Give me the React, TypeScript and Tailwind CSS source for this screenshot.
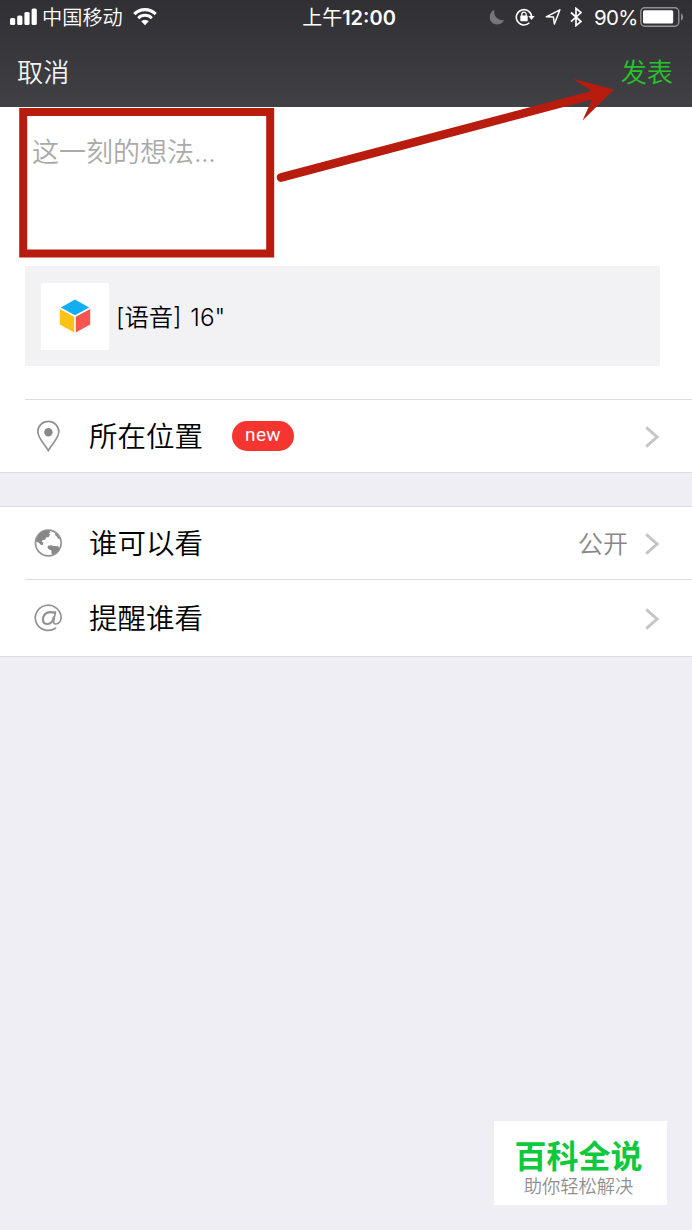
import type { ReactNode } from "react";

// Props for a single settings row
interface OptionRowProps {
  icon: ReactNode;
  label: string;
  value?: string;
  badge?: string;
  className: string;
}

// Icons of the status bar
function SignalIcon() {
  return (
    <svg className="w-[27px] h-[18px]" viewBox="0 0 27 18" fill="#fff">
      <rect x="0" y="10" width="5.2" height="7" rx="1.5" />
      <rect x="7.2" y="7.5" width="5.2" height="9.5" rx="1.5" />
      <rect x="14.4" y="4" width="5.2" height="13" rx="1.5" />
      <rect x="21.6" y="0.5" width="5.2" height="16.5" rx="1.5" />
    </svg>
  );
}

function WifiIcon() {
  return (
    <svg className="w-6 h-[18px]" viewBox="0 0 24 18" fill="none" stroke="#fff">
      <path d="M1.3 6.2C7.3.1 16.7.1 22.7 6.2" strokeWidth="3.1" />
      <path d="M5.2 10.2c3.9-3.8 9.7-3.8 13.6 0" strokeWidth="3" />
      <path d="M12 17.2l-3.8-3.9c2.2-1.9 5.4-1.9 7.6 0z" fill="#fff" stroke="none" />
    </svg>
  );
}

function MoonIcon() {
  return (
    <svg className="w-4 h-4" viewBox="0 0 16 16" fill="#77767b">
      <path d="M5.4.8C4.2 6.6 8.2 12 15.2 11.2 13.6 14 11 15.4 8 15.4 3.8 15.4.7 12.3.7 8.3.7 5 2.4 2.1 5.4.8z" />
    </svg>
  );
}

function RotationLockIcon() {
  return (
    <svg className="w-5 h-[18px]" viewBox="0 0 20 18" fill="none" stroke="#fff" strokeWidth="1.6">
      <path d="M14.4 14.8A7.7 7.7 0 1 1 16.7 9" />
      <path d="M13.4 8h6.2l-3.1 4z" fill="#fff" stroke="none" />
      <path d="M6.8 8V6.4a2.2 2.2 0 0 1 4.4 0V8" strokeWidth="1.3" />
      <rect x="5.3" y="7.6" width="7.4" height="5.6" rx=".8" fill="#fff" stroke="none" />
    </svg>
  );
}

function LocationIcon() {
  return (
    <svg className="w-4 h-[18px]" viewBox="0 0 16 18" fill="none" stroke="#fff" strokeWidth="1.5">
      <path d="M1.2 8.8L14.9 1.8 9.4 16 8.4 9z" strokeLinejoin="round" />
    </svg>
  );
}

function BluetoothIcon() {
  return (
    <svg className="w-3 h-5" viewBox="0 0 12 20" fill="none" stroke="#fff" strokeWidth="1.7">
      <path d="M1 5.5l10 9L6 18.6V1.4l5 4.2-10 9" />
    </svg>
  );
}

function BatteryIcon() {
  return (
    <svg className="w-11 h-5" viewBox="0 0 44 20" fill="none">
      <rect x=".8" y=".8" width="38" height="18.4" rx="4" stroke="#929196" strokeWidth="1.4" />
      <rect x="3" y="3.2" width="30.2" height="13.4" rx="1.6" fill="#fff" />
      <path d="M41 6.4c2.8 1.2 2.8 5.8 0 7z" fill="#8b8a8f" />
    </svg>
  );
}

// Icons of the post and its options
function CubeIcon() {
  return (
    <svg className="w-8 h-[34px]" viewBox="0 0 32 34">
      <path d="M16 .6L30.2 8.5 16 16.2 1.8 8.5z" fill="#13aef2" />
      <path d="M.8 10L15.2 17.7v15.8L.8 25.4z" fill="#f8c316" />
      <path d="M31.2 10L16.8 17.7v15.8l14.4-8.1z" fill="#f65353" />
    </svg>
  );
}

function PinIcon() {
  return (
    <svg className="w-6 h-8" viewBox="0 0 24 32">
      <path
        d="M12.3 30.5C8.8 24.4 1.8 18 1.8 11.8a10.5 10.5 0 0 1 21 0c0 6.2-7 12.6-10.5 18.7z"
        fill="none"
        stroke="#929292"
        strokeWidth="1.7"
      />
      <circle cx="12.4" cy="12.2" r="4.2" fill="#888" />
    </svg>
  );
}

function GlobeIcon() {
  return (
    <svg className="w-7 h-7" viewBox="0 0 28 28">
      <circle cx="14.3" cy="14" r="12.8" fill="none" stroke="#929292" strokeWidth="1.7" />
      <path
        d="M2.2 12.5C2.5 7 6.5 2 12.4 1.4l3.2.5 1 1.5-1.8.6 1.2 1.8-1.4 2.2-2.4.5-1.2 2.2-2.6.6-.6 1.4 1.6.8-.6 2.4-1.8.2-1.8-2.2z"
        fill="#888"
      />
      <path
        d="M13.8 16.8l3.4-.6 2.1.8 4.8.2 1.6 1.8c-1.7 3.7-4.4 5.8-7.7 6.6l-.8-2.6.5-1.5-2.2-.8-1.9-1.7z"
        fill="#888"
      />
      <path d="M21.5 3.9l3 3.3 1.3 3-1.6-.4-1.5-2.4-1.7-1.4z" fill="#888" />
    </svg>
  );
}

function MentionIcon() {
  return (
    <svg
      className="w-7 h-7"
      viewBox="0 0 28 28"
      fill="none"
      stroke="#929292"
      strokeWidth="1.7"
      strokeLinecap="round"
    >
      <path d="M21.5 24.2A12.9 12.6 0 1 1 27.1 13.4c0 4.1-2.5 6.6-5.2 6.6-2 0-2.6-1.2-2.2-3.3l1.7-8.6" />
      <path
        d="M19.7 13.4c-.9 4.4-3.3 6.6-6.1 6.6-2.9 0-4.7-1.7-4.7-4.6 0-4.2 3-7.3 7.2-7.3 1.8 0 3.4.1 4.9.5"
        strokeWidth="2.2"
      />
    </svg>
  );
}

function ChevronIcon() {
  return (
    <svg
      className="w-3.5 h-[22px]"
      viewBox="0 0 14 22"
      fill="none"
      stroke="#c5c5c9"
      strokeWidth="2.9"
    >
      <path d="M1.2 1.3L12 11 1.2 20.7" />
    </svg>
  );
}

// One tappable row of the options list
function OptionRow({ icon, label, value, badge, className }: OptionRowProps) {
  return (
    <div className={`flex items-center pl-[34px] pr-[33px] ${className}`}>
      <div className="w-7 flex justify-center">{icon}</div>
      <span className="ml-[27px] pt-0.5 text-[28.5px] leading-10 text-black">{label}</span>
      {badge && (
        <span className="ml-[29px] w-[62px] h-[30px] rounded-full bg-[#f43530] text-center text-[19px] leading-[27px] tracking-[0.4px] text-white font-normal font-[Roboto]">
          {badge}
        </span>
      )}
      <div className="ml-auto pt-0.5 flex items-center">
        {value && <span className="mr-[17px] text-[25px] leading-9 text-[#888]">{value}</span>}
        <ChevronIcon />
      </div>
    </div>
  );
}

function StatusBar() {
  return (
    <div className="grid grid-cols-[291px_116px_1fr] h-9 text-[20px] leading-9 text-white">
      <div className="flex items-center pl-[10px] h-[34px]">
        <SignalIcon />
        <span className="ml-[5px] mr-[10px] pt-px text-[20.2px]">中国移动</span>
        <WifiIcon />
      </div>
      <div className="text-center font-normal whitespace-nowrap">
        上午<span className="font-semibold">12:00</span>
      </div>
      <div className="flex items-center justify-end pr-2 h-[34px]">
        <MoonIcon />
        <div className="ml-2.5 mr-[10px]">
          <RotationLockIcon />
        </div>
        <LocationIcon />
        <div className="ml-[9px] mr-3">
          <BluetoothIcon />
        </div>
        <span className="w-[41px] mr-[5px] pt-px text-[20.5px] tracking-[-0.7px] font-normal">
          90%
        </span>
        <BatteryIcon />
      </div>
    </div>
  );
}

// Red frame and arrow that point out the text field and the send button
function Annotations() {
  return (
    <svg className="absolute left-0 top-0 w-[692px] h-[270px]" viewBox="0 0 692 270">
      <rect x="23.2" y="112" width="247" height="141.5" fill="none" stroke="#b71c0f" strokeWidth="8" />
      <path
        d="M280 173.2L591.5 91 573 78.8l41 10.8-31.5 31 9.5-21.2L282 181.8c-5.5 1-7.5-7.2-2-8.6z"
        fill="#b71c0f"
      />
    </svg>
  );
}

export default function App() {
  return (
    <main className="relative w-[692px] h-[1230px] flex flex-col bg-[#efeef5] overflow-hidden font-[350] font-['Inter','Noto_Sans_CJK_SC',sans-serif]">
      <header className="h-[107px] shrink-0 bg-linear-to-b from-[#302f34] to-[#414044]">
        <StatusBar />
        <div className="flex justify-between pl-[17px] pr-[19px] text-[26.2px] leading-[73px]">
          <span className="text-[#f2f2f3]">取消</span>
          <span className="text-[#26c42a]">发表</span>
        </div>
      </header>

      {/* Post editor */}
      <section className="h-[292px] shrink-0 bg-white pl-[25px] pr-[32px]">
        <p className="h-[159px] pt-[26px] pl-[7px] text-[27px] leading-10 text-[#aaa]">
          这一刻的想法<span className="tracking-[-0.5px]">...</span>
        </p>
        <div className="h-[100px] flex items-center bg-[#f2f2f4] pl-4">
          <div className="w-[68px] h-[67px] bg-white flex items-center justify-center">
            <CubeIcon />
          </div>
          <span className="ml-[7px] pt-0.5 text-[24.3px] leading-9 text-black [word-spacing:2px]">
            [语音] 16"
          </span>
        </div>
      </section>

      {/* Location */}
      <section className="shrink-0 bg-white border-b border-[#dddde1]">
        <div className="ml-[25px] h-px bg-[#dedee0]" />
        <OptionRow icon={<PinIcon />} label="所在位置" badge="new" className="h-[72px]" />
      </section>

      {/* Audience and mentions */}
      <section className="mt-[33px] shrink-0 bg-white border-y border-[#dddde1]">
        <OptionRow icon={<GlobeIcon />} label="谁可以看" value="公开" className="h-[72px]" />
        <div className="ml-[25px] h-px bg-[#dedee0]" />
        <OptionRow icon={<MentionIcon />} label="提醒谁看" className="h-[76px]" />
      </section>

      {/* Site label */}
      <footer className="mt-auto mb-[25px] mr-[25px] self-end w-[173px] h-[84px] bg-white pt-4 pr-1 text-center">
        <p className="text-[32px] leading-10 font-bold text-[#0dc93b]">百科全说</p>
        <p className="text-[18.3px] leading-[18px] text-[#909090]">助你轻松解决</p>
      </footer>

      <Annotations />
    </main>
  );
}
